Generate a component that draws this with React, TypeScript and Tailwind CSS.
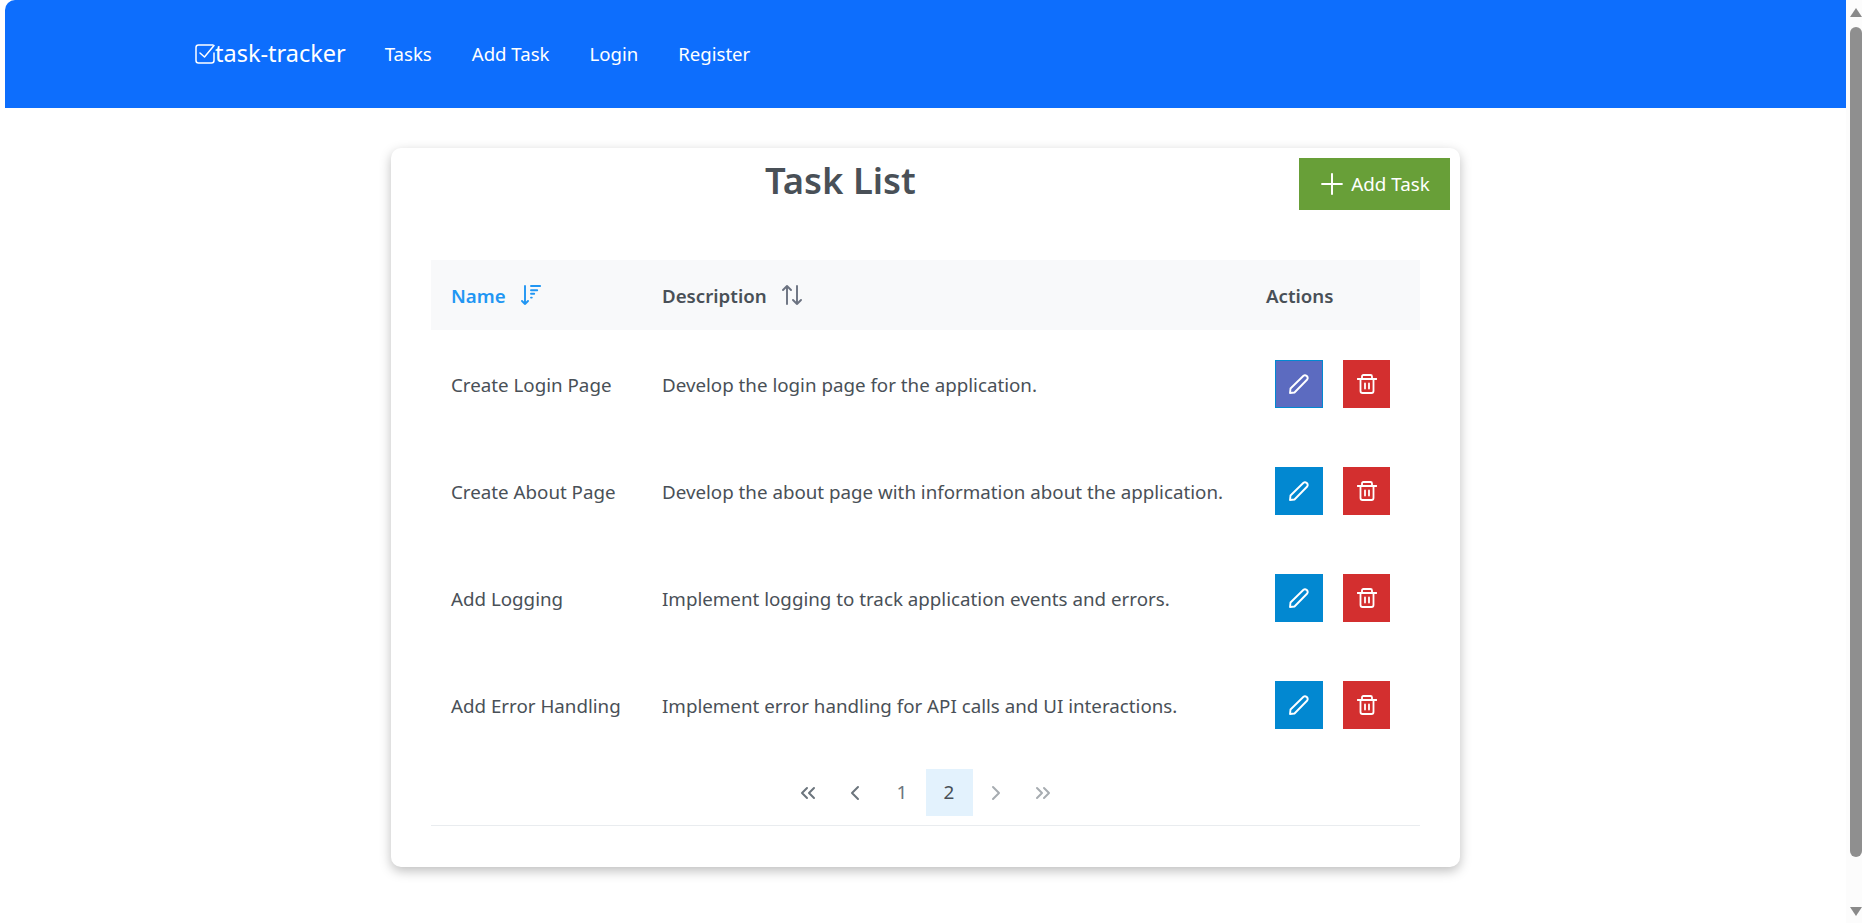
import React from "react";
import { ChevronLeft, ChevronRight, ChevronsLeft, ChevronsRight, Plus } from "lucide-react";

const font = { fontFamily: '"Noto Sans", sans-serif' };

const tasks = [
  ["Create Login Page", "Develop the login page for the application."],
  ["Create About Page", "Develop the about page with information about the application."],
  ["Add Logging", "Implement logging to track application events and errors."],
  ["Add Error Handling", "Implement error handling for API calls and UI interactions."],
];

function BrandIcon() {
  return (
    <svg width="20" height="20" viewBox="0 0 20 20" fill="none" stroke="white" strokeWidth="1.5" strokeLinecap="round" strokeLinejoin="round" className="shrink-0">
      <path d="M18 1 H3.5 Q1 1 1 3.5 V16.5 Q1 19 3.5 19 H16.5 Q19 19 19 16.5 V9" />
      <path d="M5 9 L9.5 13 L19 1.5" />
    </svg>
  );
}

function PencilIcon() {
  return (
    <svg width="20" height="20" viewBox="0 0 20 20" fill="none" stroke="white" strokeWidth="1.9" strokeLinejoin="round" strokeLinecap="round">
      <path d="M1 19 L1.5 14.5 L14.5 1.8 Q16 0.6 17.8 2 Q19.4 3.8 18.2 5.5 L5.5 18.5 Z" />
    </svg>
  );
}

function TrashIcon() {
  return (
    <svg width="20" height="20" viewBox="0 0 20 20" fill="none" stroke="white" strokeWidth="1.8" strokeLinecap="round" strokeLinejoin="round">
      <path d="M0.5 5 H19.5" />
      <path d="M5 5 V2.5 Q5 1 6.5 1 H13.5 Q15 1 15 2.5 V5" />
      <path d="M3.5 5 V17 Q3.5 19 5.5 19 H14.5 Q16.5 19 16.5 17 V5" />
      <path d="M8 9.5 V14.5 M12 9.5 V14.5" />
    </svg>
  );
}

function SortDown() {
  return (
    <svg width="20" height="20" viewBox="0 0 20 20" fill="none" stroke="#2196f3" strokeWidth="1.9" strokeLinecap="round" strokeLinejoin="round">
      <path d="M4 1 V19 M1 16 L4 19 L7 16" />
      <path d="M10 1 H19.2 M10 5.2 H16.2 M10 8.8 H13.2 M10 12.6 H10.8" />
    </svg>
  );
}

function SortAlt() {
  return (
    <svg width="20" height="20" viewBox="0 0 20 20" fill="none" stroke="#6b7280" strokeWidth="1.9" strokeLinecap="round" strokeLinejoin="round">
      <path d="M5 19 V1 M1 5 L5 1 L9 5" />
      <path d="M15 1 V19 M11 15 L15 19 L19 15" />
    </svg>
  );
}

export default function App() {
  return (
    <div className="flex h-[923px] overflow-hidden bg-white" style={font}>
      <div className="w-[5px] shrink-0 bg-white" />
      <main className="flex min-w-0 flex-1 flex-col">
        <nav className="flex h-[108px] shrink-0 items-center rounded-tl-[10px] bg-[#0d6efd] pl-[190px] text-white">
          <a className="flex items-center text-[23.5px] leading-none">
            <BrandIcon />
            <span>task-tracker</span>
          </a>
          <div className="ml-[39px] flex gap-[40px] text-[18.6px] leading-none">
            <a>Tasks</a>
            <a>Add Task</a>
            <a>Login</a>
            <a>Register</a>
          </div>
        </nav>
        <div className="flex justify-center pt-[40px]">
          <section className="h-[719px] w-[1069px] rounded-[10px] bg-white px-[40px] pt-[10px] shadow-[0_4px_12px_rgba(0,0,0,0.26)]">
            <div className="flex h-[102px] items-start justify-between">
              <h1 className="ml-[334px] text-[36.4px] leading-[45px] font-semibold text-[#495057]">Task List</h1>
              <button className="mr-[-30px] flex h-[52px] w-[151px] items-center justify-center gap-[2px] bg-[#689f38] pr-[4px] text-[18.8px] text-white">
                <Plus size={34} strokeWidth={1.4} />
                <span className="pt-[1px]">Add Task</span>
              </button>
            </div>
            <div className="flex h-[70px] items-center bg-[#f8f9fa] text-[18.7px] font-semibold text-[#495057]">
              <div className="flex w-[231px] items-center gap-[15px] pl-[20px] text-[#2196f3]">
                <span className="pt-[3px]">Name</span> <SortDown />
              </div>
              <div className="flex w-[604px] items-center gap-[15px]">
                <span className="pt-[3px]">Description</span> <SortAlt />
              </div>
              <div className="pt-[3px]">Actions</div>
            </div>
            {tasks.map((t, i) => (
              <div key={t[0]} className="flex h-[107px] items-center text-[18.75px] text-[#495057]">
                <div className="w-[231px] pt-[4px] pl-[20px] whitespace-nowrap">{t[0]}</div>
                <div className="w-[613px] pt-[4px] whitespace-nowrap">{t[1]}</div>
                <div className="flex gap-[20px]">
                  <button className={`flex h-[48px] w-[48px] items-center justify-center border border-[#0288d1] ${i === 0 ? "bg-[#5c6bc0]" : "bg-[#0288d1]"}`}>
                    <PencilIcon />
                  </button>
                  <button className="flex h-[48px] w-[47px] items-center justify-center bg-[#d32f2f]">
                    <TrashIcon />
                  </button>
                </div>
              </div>
            ))}
            <div className="flex h-[68px] items-start justify-center border-b border-[#e9ecef] pt-[11px] text-[18.9px] text-[#6c757d]">
              <div className="flex h-[47px] w-[47px] items-center justify-center"><ChevronsLeft size={24} color="#6c757d" /></div>
              <div className="flex h-[47px] w-[47px] items-center justify-center"><ChevronLeft size={24} color="#6c757d" /></div>
              <div className="flex h-[47px] w-[47px] items-center justify-center">1</div>
              <div className="flex h-[47px] w-[47px] items-center justify-center bg-[#e3f2fd] text-[#495057]">2</div>
              <div className="flex h-[47px] w-[47px] items-center justify-center"><ChevronRight size={24} color="#a7acb1" /></div>
              <div className="flex h-[47px] w-[47px] items-center justify-center"><ChevronsRight size={24} color="#a7acb1" /></div>
            </div>
          </section>
        </div>
      </main>
      <aside className="flex w-[16px] shrink-0 flex-col items-end bg-[#fcfcfc]">
        <svg width="12" height="9" viewBox="0 0 12 9" className="mt-[8px]" fill="#8a8a8a"><path d="M6 0 L12 9 H0 Z" /></svg>
        <div className="mt-[10px] h-[830px] w-[12px] rounded-[6px] bg-[#8f8f8f]" />
        <svg width="12" height="9" viewBox="0 0 12 9" className="mt-[50px]" fill="#8a8a8a"><path d="M0 0 H12 L6 9 Z" /></svg>
      </aside>
    </div>
  );
}
